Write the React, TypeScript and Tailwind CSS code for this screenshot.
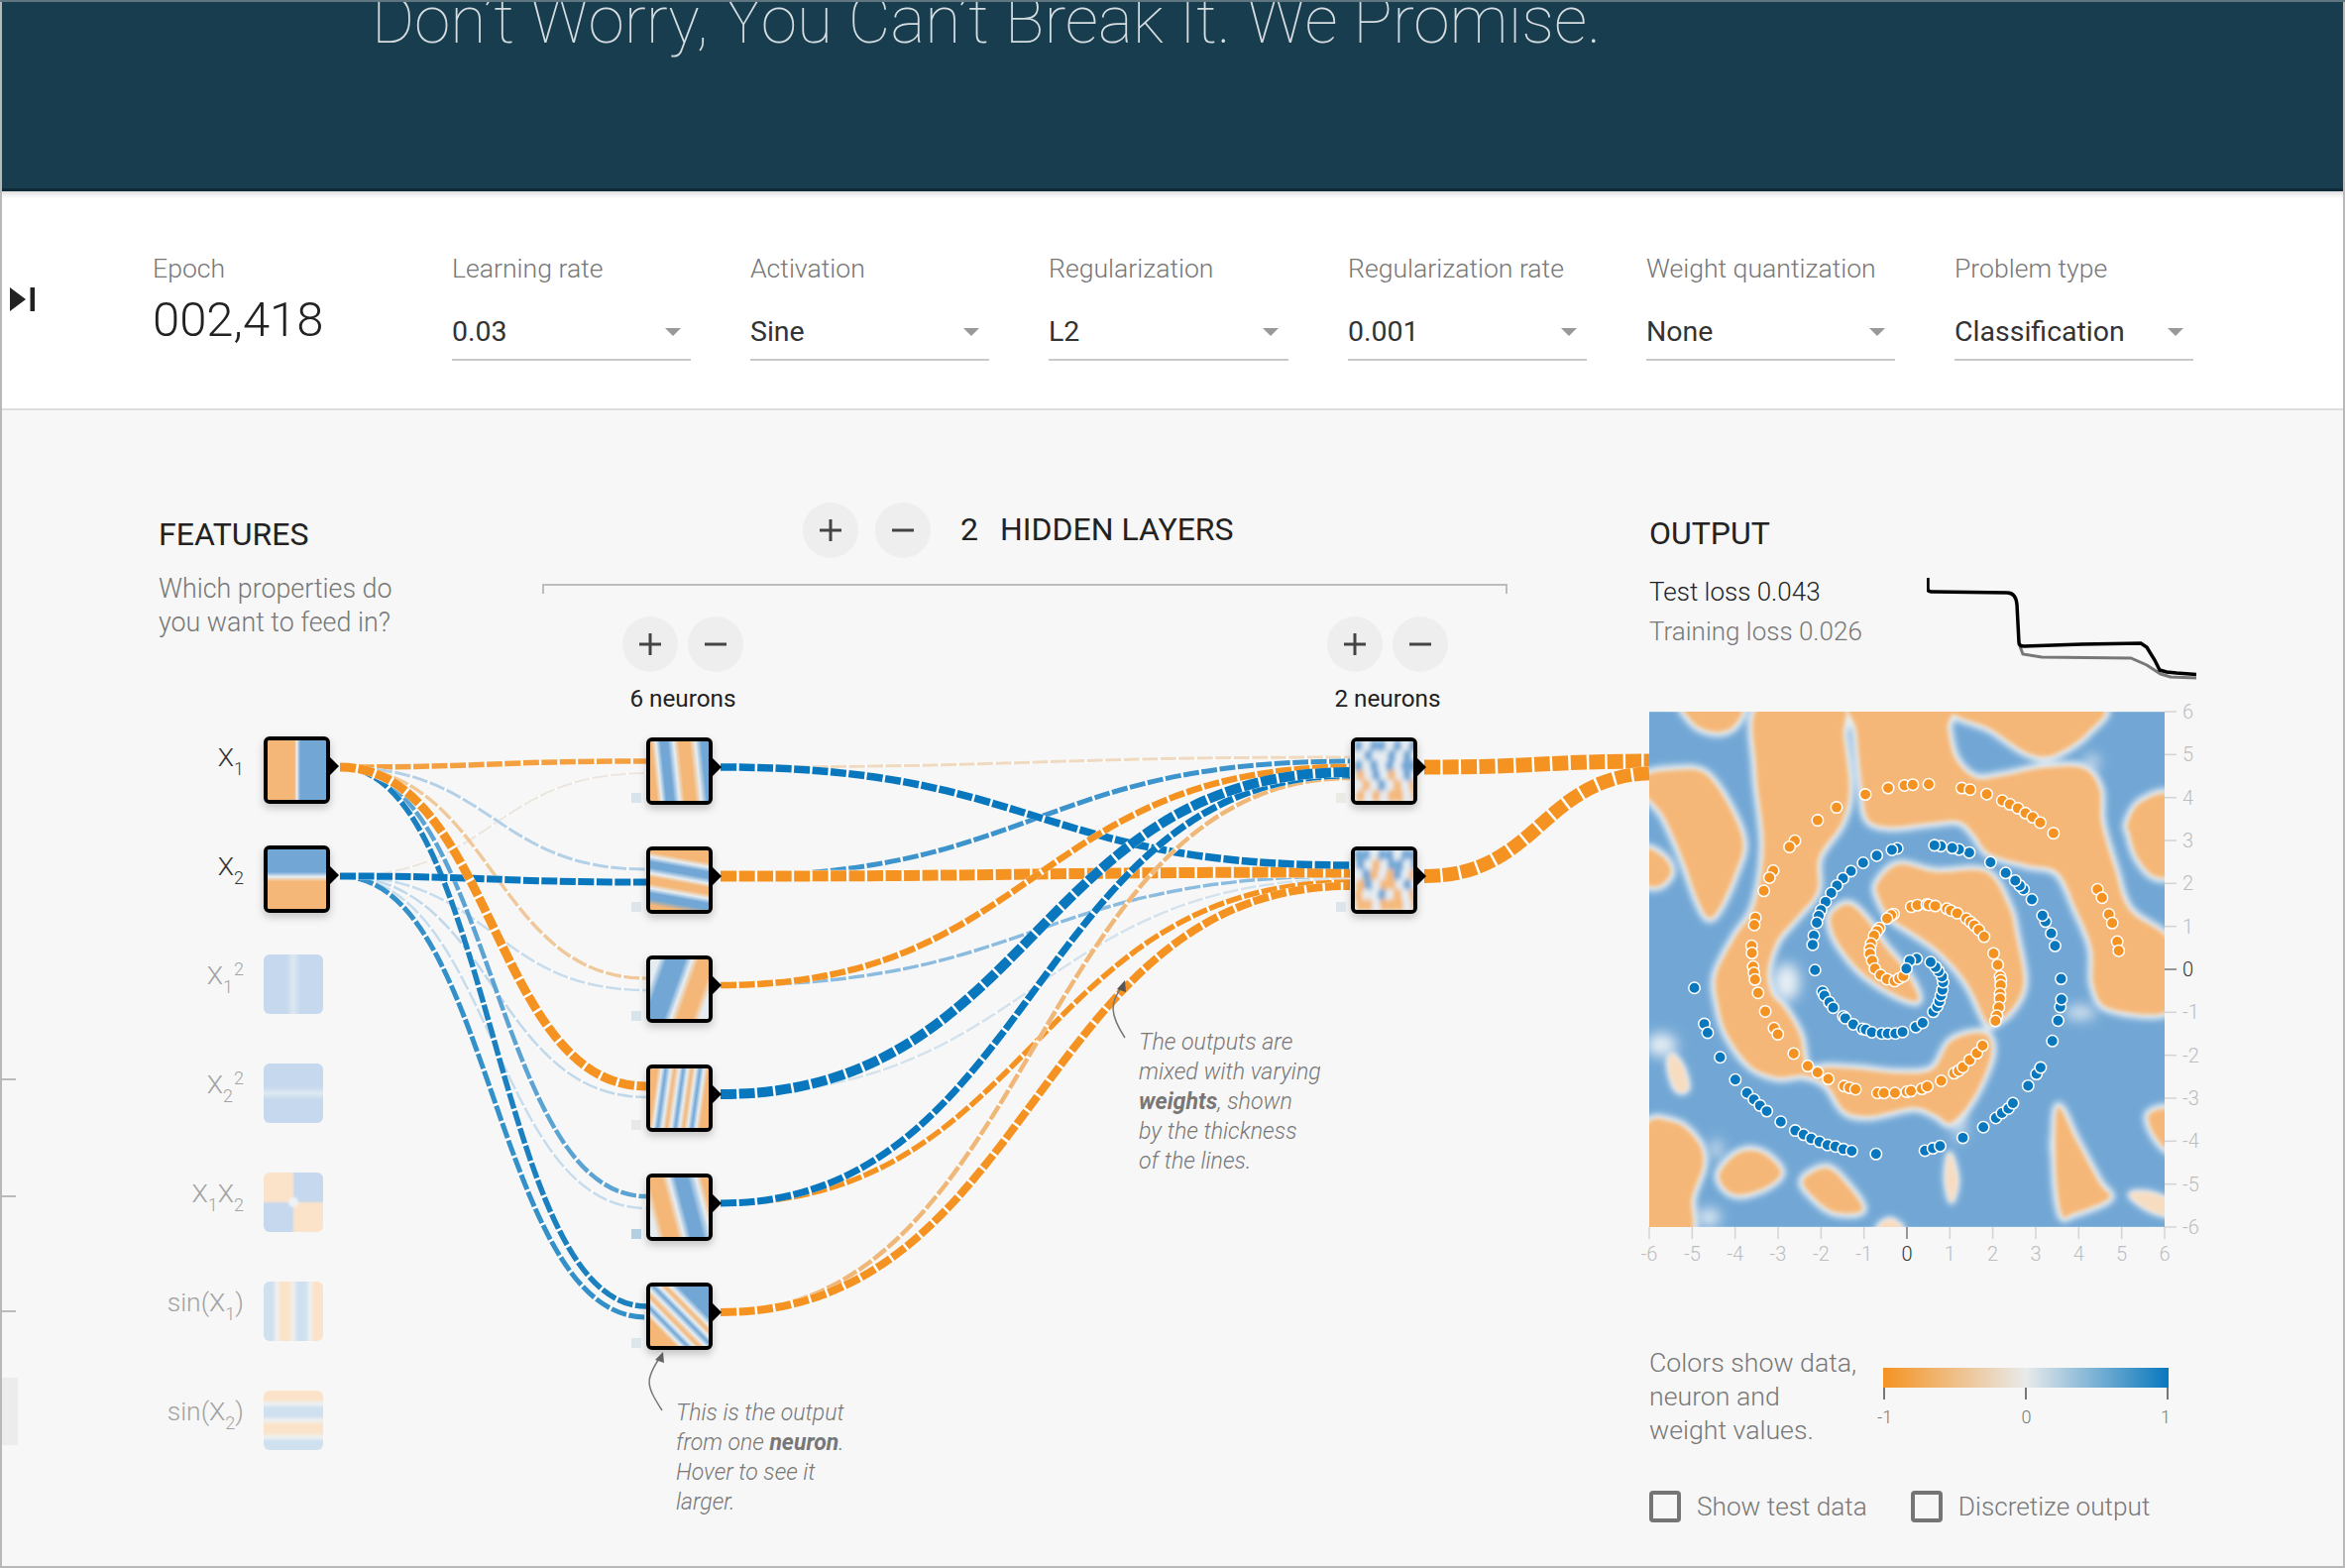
import type { ReactNode } from "react";

const ORANGE = "#f5b777";
const BLUE = "#72a7d5";
const PALE = "#e6edf2";

type Stop = [number, string];

const axisTicks = [-6, -5, -4, -3, -2, -1, 0, 1, 2, 3, 4, 5, 6];

// ---- thumbnails ----

const Stripes = ({ id, angle, stops }: { id: string; angle: number; stops: Stop[] }) => {
  const rad = (angle * Math.PI) / 180;
  const dx = Math.cos(rad) / 2;
  const dy = Math.sin(rad) / 2;
  return (
    <svg viewBox="0 0 60 60" preserveAspectRatio="none" className="block h-full w-full">
      <defs>
        <linearGradient id={id} x1={0.5 - dx} y1={0.5 - dy} x2={0.5 + dx} y2={0.5 + dy}>
          {stops.map(([at, color], i) => (
            <stop key={i} offset={`${at}%`} stopColor={color} />
          ))}
        </linearGradient>
      </defs>
      <rect width="60" height="60" fill={`url(#${id})`} />
    </svg>
  );
};

const Mottled = ({ id, rows }: { id: string; rows: string[] }) => {
  const colors: Record<string, string> = { b: BLUE, o: ORANGE, w: PALE };
  return (
    <svg viewBox="0 0 60 60" preserveAspectRatio="none" className="block h-full w-full">
      <defs>
        <filter id={id} x="-10%" y="-10%" width="120%" height="120%">
          <feGaussianBlur stdDeviation="2.4" />
        </filter>
      </defs>
      <rect width="60" height="60" fill={PALE} />
      <g filter={`url(#${id})`}>
        {rows.map((row, y) =>
          row.split("").map((c, x) => (
            <ellipse key={`${x}-${y}`} cx={x * 8 + 4 + (y % 2) * 2} cy={y * 10 + 5} rx="4.6" ry="6.4" fill={colors[c]} />
          )),
        )}
      </g>
    </svg>
  );
};

const QuadThumb = () => (
  <svg viewBox="0 0 60 60" className="block h-full w-full">
    <defs>
      <filter id="quadblur" x="-10%" y="-10%" width="120%" height="120%">
        <feGaussianBlur stdDeviation="0.8" />
      </filter>
    </defs>
    <g filter="url(#quadblur)">
      <rect x="-5" y="-5" width="35" height="35" fill="#fbe3c9" />
      <rect x="30" y="-5" width="35" height="35" fill="#c5d8ed" />
      <rect x="-5" y="30" width="35" height="35" fill="#c5d8ed" />
      <rect x="30" y="30" width="35" height="35" fill="#fbe3c9" />
      <circle cx="30" cy="30" r="5" fill="#eef2f4" />
    </g>
  </svg>
);

const Arrow = () => (
  <svg width="10" height="18" viewBox="0 0 10 18" className="absolute left-full top-[21px]">
    <path d="M0 0 L9 9 L0 18 Z" fill="#000" />
  </svg>
);

const Node = ({ swatch, children }: { swatch?: string; children: ReactNode }) => (
  <div className="relative z-10 h-[68px] w-[67px]">
    {swatch && <div className={`absolute left-[-15px] top-[56px] h-[10px] w-[10px] ${swatch}`} />}
    <div className="h-full w-full overflow-hidden rounded-[6px] border-4 border-black bg-white shadow-[0_4px_8px_rgba(0,0,0,0.22)]">
      {children}
    </div>
    <Arrow />
  </div>
);

const Feature = ({ label, active, children }: { label: ReactNode; active?: boolean; children: ReactNode }) => (
  <div className="flex h-[110px] items-start gap-[20px]">
    <div className={`mt-[6px] h-[50px] w-[86px] whitespace-nowrap text-right text-[26.500px] leading-[30px] ${active ? "text-[#333]" : "text-[#a3a3a3]"}`}>
      {label}
    </div>
    {active ? <Node>{children}</Node> : <div className="relative z-10 h-[60px] w-[60px] overflow-hidden rounded-[6px]">{children}</div>}
  </div>
);

const Sub = ({ children }: { children: ReactNode }) => <sub className="bottom-[-9px] text-[18px] leading-none">{children}</sub>;
const Sup = ({ children }: { children: ReactNode }) => <sup className="ml-[1px] text-[18px] leading-none">{children}</sup>;

// ---- links between the nodes ----

type LinkDef = { from: [number, number]; to: [number, number]; color: string; width: number };

const H1 = 727;
const inX = 343;
const t1 = 652;
const t2 = 1362;
const ys = [774, 884, 994, 1104, 1214, 1324];

const links: LinkDef[] = [
  { from: [inX, 774], to: [t1, 768], color: "#f4a040", width: 5.5 },
  { from: [inX, 884], to: [t1, 780], color: "#ebe5de", width: 2 },
  { from: [inX, 774], to: [t1, 877], color: "#b4d0e6", width: 3 },
  { from: [inX, 774], to: [t1, 987], color: "#efc89c", width: 3.5 },
  { from: [inX, 884], to: [t1, 999], color: "#c6dcec", width: 2.5 },
  { from: [inX, 884], to: [t1, 1219], color: "#c6dcec", width: 2.5 },
  { from: [inX, 884], to: [t1, 1107], color: "#c0d8ea", width: 2.5 },
  { from: [inX, 774], to: [t1, 1207], color: "#5ba3d2", width: 4.5 },
  { from: [inX, 884], to: [t1, 1329], color: "#3490c8", width: 5 },
  { from: [inX, 774], to: [t1, 1318], color: "#1a80c0", width: 5.5 },
  { from: [inX, 884], to: [t1, 890], color: "#0877bd", width: 7 },
  { from: [inX, 774], to: [t1, 1096], color: "#f59322", width: 9 },

  { from: [H1, ys[0]], to: [t2, 764], color: "#efd9bf", width: 3 },
  { from: [H1, ys[3]], to: [t2, 887], color: "#d4e2ec", width: 2.5 },
  { from: [H1, ys[2]], to: [t2, 884], color: "#8bbbde", width: 3.5 },
  { from: [H1, ys[1]], to: [t2, 768], color: "#3d93cb", width: 5 },
  { from: [H1, ys[1]], to: [t2, 880], color: "#f59322", width: 11 },
  { from: [H1, ys[0]], to: [t2, 873], color: "#0877bd", width: 7.5 },
  { from: [H1, ys[2]], to: [t2, 774], color: "#f59322", width: 6.5 },
  { from: [H1, ys[4]], to: [t2, 890], color: "#f59322", width: 5.5 },
  { from: [H1, ys[5]], to: [t2, 785], color: "#f0b878", width: 4.5 },
  { from: [H1, ys[5]], to: [t2, 894], color: "#f59322", width: 8 },
  { from: [H1, ys[4]], to: [t2, 782], color: "#0877bd", width: 7 },
  { from: [H1, ys[3]], to: [t2, 779], color: "#0877bd", width: 10 },

  { from: [1437, 774], to: [1672, 768], color: "#f59322", width: 15 },
  { from: [1437, 884], to: [1672, 780], color: "#f59322", width: 14 },
];

const linkPath = ({ from, to }: LinkDef) => {
  const mx = (from[0] + to[0]) / 2;
  return `M${from[0]} ${from[1]} C${mx} ${from[1]} ${mx} ${to[1]} ${to[0]} ${to[1]}`;
};

const LinkLayer = () => (
  <svg width="2366" height="1582" className="pointer-events-none absolute left-0 top-0" fill="none">
    {links.map((l, i) => (
      <g key={i}>
        <path d={linkPath(l)} stroke="#fff" strokeWidth={l.width} />
        <path d={linkPath(l)} stroke={l.color} strokeWidth={l.width} strokeDasharray="16 2.5" />
      </g>
    ))}
    <path d="M668 1423 C652 1398 650 1392 667 1368" stroke="#777" strokeWidth="1.5" />
    <path d="M669 1364 L661 1372 L670 1375 Z" fill="#666" />
    <path d="M1135 1047 C1120 1024 1119 1012 1133 994" stroke="#777" strokeWidth="1.5" />
    <path d="M1135 989 L1127 998 L1136 1001 Z" fill="#555" />
  </svg>
);

// ---- output heatmap, points are traced in a 63..1422 / 47..1405 box ----

const blob = (pts: number[][]) => {
  const n = pts.length;
  let d = `M${pts[0][0]} ${pts[0][1]}`;
  for (let i = 0; i < n; i++) {
    const p0 = pts[(i - 1 + n) % n];
    const p1 = pts[i];
    const p2 = pts[(i + 1) % n];
    const p3 = pts[(i + 2) % n];
    d += ` C${p1[0] + (p2[0] - p0[0]) / 6} ${p1[1] + (p2[1] - p0[1]) / 6} ${p2[0] - (p3[0] - p1[0]) / 6} ${p2[1] - (p3[1] - p1[1]) / 6} ${p2[0]} ${p2[1]}`;
  }
  return d + " Z";
};

const blobs: number[][][] = [
  [[160, 30], [300, 30], [290, 80], [250, 100], [200, 90], [170, 65]],
  [[355, 30], [345, 200], [365, 400], [340, 560], [290, 640], [240, 740], [245, 820], [270, 900], [330, 980], [400, 1010], [470, 1005], [530, 1030], [580, 1100], [650, 1112], [760, 1090], [820, 1110], [860, 1130], [920, 1060], [965, 950], [945, 895], [860, 915], [810, 990], [720, 1000], [620, 990], [540, 985], [480, 985], [460, 900], [420, 830], [385, 790], [375, 730], [400, 650], [450, 590], [505, 520], [510, 430], [570, 340], [590, 250], [575, 110], [565, 30]],
  [[605, 30], [845, 30], [850, 90], [870, 170], [925, 222], [1000, 215], [1100, 195], [1205, 195], [1250, 250], [1255, 340], [1290, 460], [1330, 570], [1440, 660], [1440, 830], [1280, 830], [1235, 770], [1230, 670], [1190, 570], [1140, 470], [1060, 450], [960, 420], [920, 370], [880, 335], [800, 340], [700, 350], [640, 330], [625, 250], [610, 100]],
  [[860, 30], [1240, 30], [1220, 100], [1130, 160], [1060, 155], [960, 90], [880, 60]],
  [[50, 215], [140, 200], [210, 210], [270, 290], [310, 390], [290, 470], [250, 560], [220, 590], [190, 540], [150, 430], [100, 320], [50, 260]],
  [[50, 410], [100, 430], [120, 470], [90, 505], [50, 495]],
  [[50, 1150], [130, 1130], [190, 1180], [205, 1240], [175, 1330], [170, 1420], [50, 1420]],
  [[250, 1260], [300, 1210], [360, 1210], [410, 1260], [370, 1300], [300, 1320], [260, 1300]],
  [[470, 1280], [530, 1250], [580, 1290], [625, 1360], [550, 1365], [490, 1320]],
  [[1140, 1090], [1190, 1180], [1250, 1290], [1275, 1330], [1180, 1370], [1150, 1370], [1135, 1250]],
  [[1380, 1110], [1440, 1100], [1440, 1200], [1400, 1170]],
  [[1325, 340], [1360, 285], [1440, 275], [1440, 460], [1395, 480], [1350, 430], [1330, 370]],
  [[665, 500], [720, 450], [820, 470], [950, 470], [1010, 560], [1030, 640], [1050, 760], [1020, 830], [970, 870], [950, 860], [900, 760], [830, 680], [760, 630], [700, 590], [670, 540]],
  [[545, 580], [590, 555], [640, 600], [680, 660], [730, 720], [770, 790], [760, 810], [690, 780], [620, 730], [570, 670], [545, 620]],
];

const faint: number[][][] = [
  [[120, 950], [150, 980], [165, 1040], [135, 1045], [115, 990]],
  [[1330, 1320], [1380, 1315], [1440, 1340], [1440, 1375], [1380, 1360]],
  [[670, 1400], [700, 1385], [730, 1410], [670, 1420]],
  [[855, 1210], [875, 1280], [860, 1340], [845, 1280]],
];

const whiteSpots: number[][] = [
  [425, 760, 35, 50],
  [95, 925, 40, 30],
  [1200, 840, 40, 16],
  [1145, 1190, 16, 24],
  [240, 1200, 14, 24],
  [880, 1130, 14, 50],
  [220, 1380, 30, 22],
  [1230, 180, 18, 18],
];

const orangeDots = [
  [633, 265], [693, 248], [736, 241], [758, 239], [800, 238], [887, 248], [909, 252], [953, 264], [994, 281], [1014, 291], [1035, 301], [1055, 314], [1074, 325], [1094, 339], [1129, 367],
  [557, 299], [507, 333], [447, 387], [433, 403], [390, 466], [380, 484], [365, 519], [343, 590], [340, 609], [333, 664], [334, 683], [337, 719], [339, 735], [342, 753], [350, 788], [369, 837], [392, 881], [402, 897], [444, 948], [481, 981], [507, 998], [535, 1015], [577, 1034], [591, 1038], [607, 1042], [665, 1052], [682, 1052], [711, 1052], [742, 1049], [753, 1047], [782, 1041], [796, 1035], [833, 1020], [867, 1000], [879, 993], [890, 984], [908, 965], [927, 947], [942, 927],
  [1245, 515], [1257, 537], [1275, 581], [1284, 604], [1297, 653], [1301, 677],
  [707, 580], [701, 583], [690, 592], [670, 617], [664, 625], [656, 637], [648, 658], [645, 672], [645, 685], [651, 703], [658, 724], [673, 741], [690, 752], [710, 757], [722, 750], [733, 744],
  [754, 561], [770, 557], [795, 555], [800, 556], [817, 559], [848, 566], [858, 571], [875, 578], [899, 592], [910, 601], [920, 610], [932, 622], [946, 640], [971, 684], [982, 714], [988, 745], [990, 755], [990, 768], [988, 790], [988, 803], [985, 826], [980, 848], [976, 862],
];

const blueDots = [
  [182, 775], [208, 870], [217, 893], [250, 958], [290, 1017], [321, 1052], [339, 1069], [355, 1085], [373, 1100], [410, 1128], [448, 1151], [470, 1162], [490, 1172], [512, 1181], [533, 1189], [554, 1193], [575, 1200], [597, 1205], [661, 1213], [790, 1204], [811, 1198], [830, 1192], [890, 1170], [944, 1142], [977, 1118], [993, 1105], [1010, 1093], [1022, 1079], [1062, 1033], [1084, 1002], [1095, 985], [1126, 915], [1141, 861], [1147, 825], [1150, 805], [1149, 751], [1133, 664], [1123, 631], [1108, 600], [1100, 584], [1072, 542], [1050, 515], [1040, 505], [1028, 492], [1003, 472], [963, 444], [907, 418], [880, 410], [862, 406], [832, 401], [815, 399],
  [717, 407], [703, 411], [663, 426], [627, 445], [595, 467], [574, 486], [558, 505], [543, 525], [528, 548], [516, 570], [510, 585], [505, 603], [497, 637], [494, 661], [500, 728], [520, 785], [525, 795], [538, 813], [548, 827], [575, 850], [580, 855], [601, 871], [625, 883], [634, 885], [650, 892], [676, 895], [692, 895], [712, 895], [731, 891], [766, 878], [784, 867], [812, 838], [822, 824], [828, 810], [832, 795], [836, 780], [838, 760], [835, 745], [826, 731], [818, 720], [805, 707], [768, 698], [750, 703], [741, 724],
];

const Heatmap = () => (
  <svg width="520" height="520" className="relative z-10 block overflow-visible">
    <defs>
      <filter id="spot" x="-60%" y="-60%" width="220%" height="220%">
        <feGaussianBlur stdDeviation="16" />
      </filter>
      <filter id="halo" x="-20%" y="-20%" width="140%" height="140%">
        <feGaussianBlur stdDeviation="8" />
      </filter>
      <filter id="soft" x="-20%" y="-20%" width="140%" height="140%">
        <feGaussianBlur stdDeviation="5" />
      </filter>
    </defs>
    <svg x="0" y="0" width="520" height="520" viewBox="63 47 1359 1358">
      <rect x="63" y="47" width="1359" height="1358" fill={BLUE} />
      <g filter="url(#spot)">
        {whiteSpots.map(([x, y, rx, ry], i) => (
          <ellipse key={i} cx={x} cy={y} rx={rx} ry={ry} fill="#e8eff4" />
        ))}
      </g>
      <g filter="url(#halo)">
        {blobs.map((b, i) => (
          <path key={i} d={blob(b)} fill="#e8eff4" stroke="#e8eff4" strokeWidth="26" />
        ))}
        {faint.map((b, i) => (
          <path key={i} d={blob(b)} fill="#e8eff4" stroke="#e8eff4" strokeWidth="14" />
        ))}
      </g>
      <g filter="url(#soft)">
        {blobs.map((b, i) => (
          <path key={i} d={blob(b)} fill={ORANGE} />
        ))}
        {faint.map((b, i) => (
          <path key={i} d={blob(b)} fill="#f8dcc0" />
        ))}
      </g>
      {orangeDots.map(([x, y], i) => (
        <circle key={i} cx={x} cy={y} r="15" fill="#f59322" stroke="#fff" strokeWidth="4" />
      ))}
      {blueDots.map(([x, y], i) => (
        <circle key={i} cx={x} cy={y} r="15" fill="#0877bd" stroke="#fff" strokeWidth="4" />
      ))}
    </svg>
    {axisTicks.map((t) => {
      const at = 260 + t * (520 / 12);
      const zero = t === 0;
      const text = zero ? "#333" : "#bdbdbd";
      const tick = zero ? "#777" : "#d4d4d4";
      return (
        <g key={t} fontSize="20" fontWeight="300">
          <line x1={at} y1="520" x2={at} y2="532" stroke={tick} strokeWidth="1.5" />
          <text x={at} y="554" textAnchor="middle" fill={text}>{t}</text>
          <line x1="520" y1={260 - t * (520 / 12)} x2="532" y2={260 - t * (520 / 12)} stroke={tick} strokeWidth="1.5" />
          <text x="538" y={267 - t * (520 / 12)} fill={text}>{t}</text>
        </g>
      );
    })}
  </svg>
);

// ---- controls ----

const Select = ({ label, value, width }: { label: string; value: string; width: string }) => (
  <div className={width}>
    <div className="h-[30px] whitespace-nowrap text-[26.600px] font-light leading-[30px] text-[#777]">{label}</div>
    <div className="mt-[20px] flex h-[58px] items-center justify-between border-b-2 border-[#c9c9c9] pr-[10px] pt-[2px] text-[28.500px] leading-[34px] text-[#333]">
      <span>{value}</span>
      <span className="h-0 w-0 border-x-[8px] border-t-[8px] border-x-transparent border-t-[#999]" />
    </div>
  </div>
);

const RoundButton = ({ minus, size }: { minus?: boolean; size: string }) => (
  <div className={`flex items-center justify-center rounded-full bg-[#eee] ${size}`}>
    <svg width="26" height="26" viewBox="0 0 26 26">
      <path d="M2 13 H24" stroke="#444" strokeWidth="3" />
      {!minus && <path d="M13 2 V24" stroke="#444" strokeWidth="3" />}
    </svg>
  </div>
);

const LayerColumn = ({ count, nodes }: { count: string; nodes: ReactNode }) => (
  <div className="w-[200px]">
    <div className="mt-[23px] flex justify-center gap-[10px]">
      <RoundButton size="h-[56px] w-[56px]" />
      <RoundButton minus size="h-[56px] w-[56px]" />
    </div>
    <div className="mt-[12px] text-center text-[24.300px] leading-[30px] text-[#222]">{count}</div>
    <div className="mt-[24px] ml-[63px] flex flex-col gap-[42px]">{nodes}</div>
  </div>
);

export default function App() {
  return (
    <div className="relative h-[1582px] w-[2366px] overflow-hidden bg-[#f7f7f7] font-['Roboto',sans-serif]">
      <header className="h-[193px] overflow-hidden border-b-[3px] border-[#0f2a38] bg-[#183d4e]">
        <h1 className="mt-[-23px] pl-[375px] whitespace-nowrap text-[65.900px] font-thin leading-[88px] text-[#d5dde1]">
          Don’t Worry, You Can’t Break It. We Promise.
        </h1>
      </header>

      <section className="flex h-[221px] items-start border-b-2 border-[#dedede] bg-white pt-[63px] shadow-[inset_0_6px_6px_-4px_rgba(0,0,0,0.18)]">
        <svg width="25" height="24" viewBox="0 0 25 24" className="ml-[10px] mt-[34px] mr-[119px] shrink-0">
          <path d="M0 0 L16 12 L0 24 Z M20.500 0 H25 V24 H20.500 Z" fill="#222" />
        </svg>
        <div className="w-[302px]">
          <div className="text-[26.600px] font-light leading-[30px] text-[#777]">Epoch</div>
          <div className="mt-[9px] text-[49px] font-light leading-[56px] text-[#222]">002,418</div>
        </div>
        <div className="flex gap-[60px]">
          <Select label="Learning rate" value="0.03" width="w-[241px]" />
          <Select label="Activation" value="Sine" width="w-[241px]" />
          <Select label="Regularization" value="L2" width="w-[242px]" />
          <Select label="Regularization rate" value="0.001" width="w-[241px]" />
          <Select label="Weight quantization" value="None" width="w-[251px]" />
          <Select label="Problem type" value="Classification" width="w-[241px]" />
        </div>
      </section>

      <LinkLayer />

      <main className="flex">
        <div className="w-[547px] pl-[160px] pt-[107px]">
          <h2 className="text-[32px] leading-[36px] text-[#222]">FEATURES</h2>
          <p className="mt-[20px] text-[26.800px] font-light leading-[34px] text-[#777]">
            Which properties do
            <br />
            you want to feed in?
          </p>
          <div className="mt-[98px] font-light">
            <Feature active label={<>X<Sub>1</Sub></>}>
              <Stripes id="x1" angle={0} stops={[[0, ORANGE], [46, ORANGE], [50, PALE], [56, BLUE], [100, BLUE]]} />
            </Feature>
            <Feature active label={<>X<Sub>2</Sub></>}>
              <Stripes id="x2" angle={90} stops={[[0, BLUE], [38, BLUE], [46, PALE], [54, ORANGE], [100, ORANGE]]} />
            </Feature>
            <Feature label={<>X<Sub>1</Sub><Sup>2</Sup></>}>
              <Stripes id="x1s" angle={0} stops={[[0, "#c5d8ed"], [38, "#c5d8ed"], [50, "#dde8f2"], [62, "#c5d8ed"], [100, "#c5d8ed"]]} />
            </Feature>
            <Feature label={<>X<Sub>2</Sub><Sup>2</Sup></>}>
              <Stripes id="x2s" angle={90} stops={[[0, "#c5d8ed"], [38, "#c5d8ed"], [50, "#dde8f2"], [62, "#c5d8ed"], [100, "#c5d8ed"]]} />
            </Feature>
            <Feature label={<>X<Sub>1</Sub>X<Sub>2</Sub></>}>
              <QuadThumb />
            </Feature>
            <Feature label={<>sin(X<Sub>1</Sub>)</>}>
              <Stripes id="sx1" angle={0} stops={[[0, "#cfe0ef"], [14, "#cfe0ef"], [22, "#eef0f0"], [30, "#fbe3c9"], [42, "#fbe3c9"], [50, "#eef0f0"], [58, "#cfe0ef"], [70, "#cfe0ef"], [78, "#eef0f0"], [86, "#fbe3c9"], [100, "#fbe3c9"]]} />
            </Feature>
            <Feature label={<>sin(X<Sub>2</Sub>)</>}>
              <Stripes id="sx2" angle={90} stops={[[0, "#fbe3c9"], [14, "#fbe3c9"], [22, "#eef0f0"], [30, "#cfe0ef"], [42, "#cfe0ef"], [50, "#eef0f0"], [58, "#fbe3c9"], [70, "#fbe3c9"], [78, "#eef0f0"], [86, "#cfe0ef"], [100, "#cfe0ef"]]} />
            </Feature>
          </div>
        </div>

        <div className="w-[974px]">
          <div className="ml-[263px] mt-[93px] flex items-center">
            <RoundButton size="h-[56px] w-[56px]" />
            <div className="ml-[17px]"><RoundButton minus size="h-[56px] w-[56px]" /></div>
            <span className="mb-[2px] ml-[30px] text-[32px] leading-[36px] text-[#222]">2</span>
            <span className="mb-[2px] ml-[22px] text-[32px] leading-[36px] text-[#222]">HIDDEN LAYERS</span>
          </div>
          <div className="mt-[26px] h-[10px] border-x-2 border-t-2 border-[#bdbdbd]" />
          <div className="flex gap-[511px] pl-[42px]">
            <LayerColumn
              count="6 neurons"
              nodes={
                <>
                  <Node swatch="bg-[#d8e4ec]">
                    <Stripes id="h1" angle={-6} stops={[[0, ORANGE], [7, ORANGE], [15, PALE], [23, BLUE], [35, BLUE], [45, PALE], [54, ORANGE], [72, ORANGE], [82, PALE], [92, BLUE], [100, BLUE]]} />
                  </Node>
                  <Node swatch="bg-[#dde5ea]">
                    <Stripes id="h2" angle={100} stops={[[0, ORANGE], [12, ORANGE], [20, PALE], [28, BLUE], [38, BLUE], [47, PALE], [54, ORANGE], [64, ORANGE], [72, PALE], [80, BLUE], [90, BLUE], [100, ORANGE]]} />
                  </Node>
                  <Node swatch="bg-[#d8e4ec]">
                    <Stripes id="h3" angle={20} stops={[[0, PALE], [12, BLUE], [42, BLUE], [53, PALE], [64, ORANGE], [88, ORANGE], [100, PALE]]} />
                  </Node>
                  <Node swatch="bg-[#e6e9e6]">
                    <Stripes id="h4" angle={8} stops={[[0, ORANGE], [6, ORANGE], [13, PALE], [20, BLUE], [28, PALE], [35, ORANGE], [43, PALE], [50, BLUE], [57, PALE], [64, ORANGE], [71, PALE], [78, BLUE], [85, PALE], [92, ORANGE], [100, ORANGE]]} />
                  </Node>
                  <Node swatch="bg-[#b4cfe2]">
                    <Stripes id="h5" angle={-15} stops={[[0, PALE], [12, ORANGE], [34, ORANGE], [45, PALE], [56, BLUE], [76, BLUE], [90, PALE], [100, ORANGE]]} />
                  </Node>
                  <Node swatch="bg-[#dce6eb]">
                    <Stripes id="h6" angle={-45} stops={[[0, ORANGE], [10, ORANGE], [17, PALE], [24, BLUE], [31, PALE], [38, ORANGE], [46, PALE], [54, BLUE], [61, PALE], [68, ORANGE], [75, PALE], [84, BLUE], [100, BLUE]]} />
                  </Node>
                </>
              }
            />
            <LayerColumn
              count="2 neurons"
              nodes={
                <>
                  <Node swatch="bg-[#ebebe6]">
                    <Mottled id="n1" rows={["bwbbwbwb", "wbwwbwbw", "bwbwbwbb", "owbwowbw", "wowbwowo", "owowoowo"]} />
                  </Node>
                  <Node swatch="bg-[#dde5ea]">
                    <Mottled id="n2" rows={["bbwbbwbb", "bwowbbwb", "wbowobwo", "obwoowbw", "owwbwowo", "oowooowo"]} />
                  </Node>
                </>
              }
            />
          </div>

          <p className="absolute left-[682px] top-[1411px] text-[23px] font-light italic leading-[30px] text-[#777]">
            This is the output
            <br />
            from one <b className="font-bold">neuron</b>.
            <br />
            Hover to see it
            <br />
            larger.
          </p>
          <p className="absolute left-[1149px] top-[1036px] text-[23.200px] font-light italic leading-[30px] text-[#777]">
            The outputs are
            <br />
            mixed with varying
            <br />
            <b className="font-bold">weights</b>, shown
            <br />
            by the thickness
            <br />
            of the lines.
          </p>
        </div>

        <div className="ml-[143px] w-[600px] pt-[106px]">
          <h2 className="text-[32px] leading-[36px] text-[#222]">OUTPUT</h2>
          <div className="mt-[21px] flex h-[113px] font-light">
            <div className="w-[280px] text-[26px] leading-[40px]">
              <div className="text-[#222]">Test loss 0.043</div>
              <div className="text-[#777]">Training loss 0.026</div>
            </div>
            <svg width="272" height="110" viewBox="1944 580 272 110" className="mt-[3px]" fill="none">
              <path d="M2038 652 L2041 660 L2060 663 L2150 664 L2166 671 L2180 680 L2190 683 L2216 684" stroke="#777" strokeWidth="3" />
              <path d="M1945 583 L1945 594 Q1945 597 1950 597 L2025 598 Q2034 598 2035 610 L2037 648 Q2037 652 2042 652 L2100 650 L2160 649 L2166 653 L2174 666 L2179 676 L2186 678 L2196 679 L2216 680.500" stroke="#000" strokeWidth="3.500" />
            </svg>
          </div>
          <div className="mt-[28px]">
            <Heatmap />
          </div>
          <div className="mt-[120px] flex font-light">
            <p className="w-[236px] text-[26.700px] leading-[34px] text-[#777]">
              Colors show data,
              <br />
              neuron and
              <br />
              weight values.
            </p>
            <div className="mt-[22px] w-[288px]">
              <div className="h-[20px] bg-[linear-gradient(to_right,#f59322,#e8eaeb,#0877bd)]" />
              <div className="flex justify-between">
                <span className="h-[12px] w-[2px] bg-[#777]" />
                <span className="h-[12px] w-[2px] bg-[#777]" />
                <span className="h-[12px] w-[2px] bg-[#777]" />
              </div>
              <div className="mt-[8px] flex justify-between text-[18px] leading-[20px] text-[#777]">
                <span className="ml-[-6px]">-1</span>
                <span>0</span>
                <span className="mr-[-2px]">1</span>
              </div>
            </div>
          </div>
          <div className="mt-[44px] flex items-center text-[26.200px] font-light leading-[32px] text-[#777]">
            <span className="h-[32px] w-[32px] rounded-[4px] border-4 border-[#757575]" />
            <span className="ml-[16px]">Show test data</span>
            <span className="ml-[44px] h-[32px] w-[32px] rounded-[4px] border-4 border-[#757575]" />
            <span className="ml-[16px]">Discretize output</span>
          </div>
        </div>
      </main>

      <span className="absolute left-0 top-[1088px] h-[2px] w-[16px] bg-[#bbb]" />
      <span className="absolute left-0 top-[1206px] h-[2px] w-[16px] bg-[#bbb]" />
      <span className="absolute left-0 top-[1322px] h-[2px] w-[16px] bg-[#bbb]" />
      <span className="absolute left-0 top-[1390px] h-[68px] w-[18px] bg-[#ececec]" />
      <div className="pointer-events-none absolute inset-0 border-x-2 border-b-2 border-[#b8b8b8]" />
      <div className="pointer-events-none absolute inset-x-0 top-0 h-[2px] bg-[#5f7681]" />
    </div>
  );
}
